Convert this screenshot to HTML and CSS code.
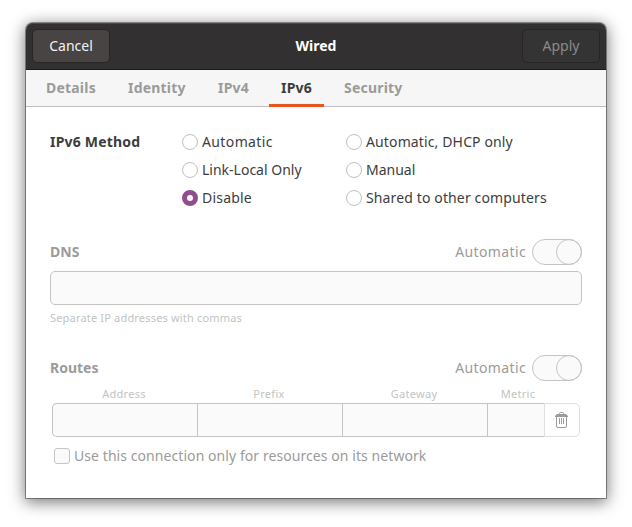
FILE: index.html
```html
<!DOCTYPE html>
<html lang="en">
<head>
<meta charset="utf-8">
<title>Wired</title>
<link rel="stylesheet" href="styles.css">
</head>
<body>
<main class="window">
  <header class="titlebar">
    <button class="btn">Cancel</button>
    <h1 class="title">Wired</h1>
    <button class="btn btn-off">Apply</button>
  </header>
  <nav class="tabs">
    <a class="tab t-details"><span>Details</span></a>
    <a class="tab t-identity"><span>Identity</span></a>
    <a class="tab t-ip"><span>IPv4</span></a>
    <a class="tab active"><span>IPv6</span></a>
    <a class="tab t-security"><span>Security</span></a>
  </nav>
  <section class="page">
    <div class="method">
      <h2 class="heading h-method">IPv6 Method</h2>
      <div class="radios">
        <label class="radio"><i class="dot"></i><span class="l-auto">Automatic</span></label>
        <label class="radio"><i class="dot"></i><span class="l-long">Automatic, DHCP only</span></label>
        <label class="radio"><i class="dot"></i><span>Link-Local Only</span></label>
        <label class="radio"><i class="dot"></i><span>Manual</span></label>
        <label class="radio"><i class="dot on"></i><span class="l-disable">Disable</span></label>
        <label class="radio"><i class="dot"></i><span class="l-long">Shared to other computers</span></label>
      </div>
    </div>
    <div class="row dns-row">
      <h2 class="heading">DNS</h2>
      <span class="auto l-auto">Automatic</span><span class="switch"><i class="knob"></i></span>
    </div>
    <div class="entry"></div>
    <p class="hint">Separate IP addresses with commas</p>
    <div class="row routes-row">
      <h2 class="heading">Routes</h2>
      <span class="auto l-auto">Automatic</span><span class="switch"><i class="knob"></i></span>
    </div>
    <div class="routes">
      <span class="col">Address</span><span class="col">Prefix</span><span class="col">Gateway</span><span class="col metric">Metric</span><span></span>
      <div class="cell first"></div><div class="cell"></div><div class="cell"></div><div class="cell"></div>
      <div class="trash">
        <svg width="16" height="16" viewBox="0 0 16 16" fill="none" stroke="#9b9b9b">
          <path d="M5.500 3V1.500q0-1 1-1h2q1 0 1 1V3"/>
          <path d="M1 5V4l2-2h9l2 2v1z" fill="#9b9b9b" stroke="none"/>
          <path d="M2.500 5v9q0 1.500 1.500 1.500h7q1.500 0 1.500-1.500V5M5.500 6v6M7.500 6v6M9.500 6v6"/>
        </svg>
      </div>
    </div>
    <label class="check"><i class="box"></i><span>Use this connection only for resources on its network</span></label>
  </section>
</main>
</body>
</html>
```
FILE: styles.css
```css
* { box-sizing: border-box; margin: 0; padding: 0; }
body {
  width: 632px; height: 527px; overflow: hidden;
  padding: 23px 26px; background: #fff;
  font: 14px/20px "Noto Sans", sans-serif; color: #3d3d3d;
}
.window {
  width: 580px; height: 475px; background: #fff;
  border-radius: 7px 7px 0 0;
  box-shadow: 0 0 0 1px rgba(0,0,0,.36), 0 3px 16px 1px rgba(0,0,0,.55);
}
.titlebar {
  height: 47px; padding: 0 6px; display: flex; align-items: center; justify-content: space-between;
  background: #323030; border-bottom: 1px solid #1c1b1b; border-radius: 7px 7px 0 0;
  box-shadow: inset 0 1px #4b4949;
}
.btn {
  width: 78px; height: 34px; border: 1px solid #272525; border-radius: 5px;
  background: #484443; color: #f2f2f2; font: inherit;
}
.btn-off { background: #353434; color: #8b8a89; }
.title { font-size: 14px; line-height: 20px; font-weight: 700; color: #fff; }
.tabs {
  height: 37px; padding-left: 8px; display: flex; background: #f6f6f6;
  border-bottom: 1px solid #c0bfbd; font-weight: 700; color: #9b9b9a;
  letter-spacing: .2px;
}
.tab { height: 37px; padding: 0 12px; line-height: 35px; white-space: nowrap; }
.t-details { width: 82px; }
.t-identity { width: 90px; }
.t-ip { width: 63px; }
.t-security { width: 90px; }
.active { width: 55px; margin-right: 8px; color: #3d3d3d; border-bottom: 3px solid #e95420; }
.page { padding: 21px 24px 0; }
.method { display: flex; height: 84px; }
.heading { font-size: 14px; line-height: 28px; font-weight: 700; white-space: nowrap; }
.h-method { width: 132px; letter-spacing: .2px; }
.radios { display: grid; grid-template-columns: 164px 220px; grid-auto-rows: 28px; }
.radio { display: flex; align-items: center; gap: 4px; white-space: nowrap; }
.l-auto { letter-spacing: .38px; }
.l-long { letter-spacing: .13px; }
.l-disable { letter-spacing: .2px; }
.dot { flex: none; width: 16px; height: 16px; border: 1px solid #bfbfbf; border-radius: 50%; background: #fff; }
.dot.on { border: 5px solid #924d8b; }
.row { display: flex; align-items: center; height: 26px; color: #9b9b9a; }
.dns-row { margin-top: 27px; }
.auto { margin-left: auto; margin-right: 6px; }
.switch { width: 50px; height: 26px; border: 1px solid #c4c4c3; border-radius: 13px; background: #fafafa; display: flex; justify-content: flex-end; }
.knob { width: 26px; height: 26px; margin: -1px; border: 1px solid #c4c4c3; border-radius: 50%; }
.entry { height: 34px; margin-top: 6px; border: 1px solid #c4c4c3; border-radius: 5px; background: #fafafa; }
.hint { height: 26px; font-size: 11px; line-height: 26px; letter-spacing: .18px; color: #c0c4c2; white-space: nowrap; }
.routes-row { margin-top: 24px; }
.routes { margin: 5px 2px 0; display: grid; grid-template-columns: 145px 145px 145px 57px 36px; grid-template-rows: 17px 34px; }
.col { padding-right: 1px; font-size: 11px; line-height: 16px; letter-spacing: .3px; text-align: center; color: #c0c4c2; }
.metric { padding: 0 0 0 5px; }
.cell { border: 1px solid #c4c4c3; border-right: 0; background: #fafafa; }
.first { border-radius: 5px 0 0 5px; }
.trash { border: 1px solid #dfdfdf; border-radius: 0 5px 5px 0; display: flex; align-items: center; justify-content: center; }
.check { display: flex; align-items: center; gap: 4px; height: 28px; margin: 5px 0 0 4px; letter-spacing: .07px; color: #9b9b9a; white-space: nowrap; }
.box { flex: none; width: 16px; height: 16px; border: 1px solid #c4c4c3; border-radius: 3px; background: #fafafa; }
```
